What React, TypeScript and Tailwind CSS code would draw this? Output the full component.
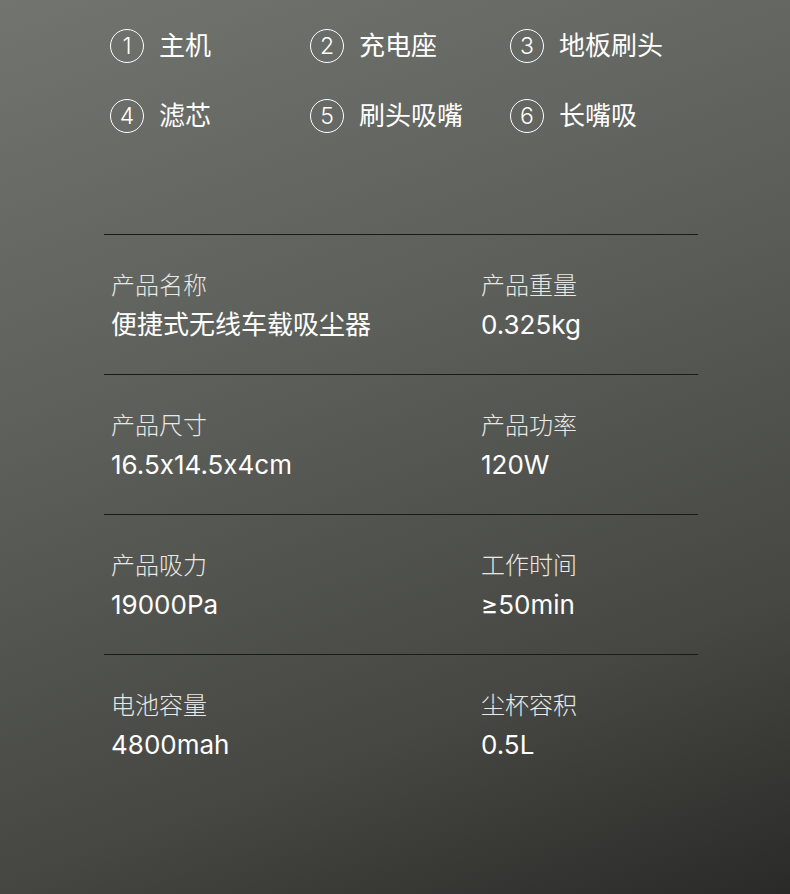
import React from "react";

const parts = [
  { n: "1", t: "主机" },
  { n: "2", t: "充电座" },
  { n: "3", t: "地板刷头" },
  { n: "4", t: "滤芯" },
  { n: "5", t: "刷头吸嘴" },
  { n: "6", t: "长嘴吸" },
];

const specs: [string, string, string, string][] = [
  ["产品名称", "便捷式无线车载吸尘器", "产品重量", "0.325kg"],
  ["产品尺寸", "16.5x14.5x4cm", "产品功率", "120W"],
  ["产品吸力", "19000Pa", "工作时间", "≥50min"],
  ["电池容量", "4800mah", "尘杯容积", "0.5L"],
];

function Cell({ label, value }: { label: string; value: string }) {
  return (
    <div className="flex flex-col gap-[6px]">
      <div className="text-[24px] leading-[32px] font-light text-[#e8e8e6]">{label}</div>
      <div className="text-[26px] leading-[34px] text-white [font-feature-settings:'calt'_0]">{value}</div>
    </div>
  );
}

export default function App() {
  return (
    <div
      className="w-[790px] h-[894px] overflow-hidden bg-[linear-gradient(160deg,#72746f_0%,#5c5e59_40%,#464742_75%,#2a2a28_100%)]"
      style={{ fontFamily: '"Inter", "Noto Sans CJK SC", sans-serif' }}
    >
      <div className="pl-[110px] pt-[29px] grid grid-cols-[200px_200px_200px] gap-y-[36px]">
        {parts.map((p) => (
          <div key={p.n} className="flex items-center gap-[15px] h-[34px]">
            <div className="w-[34px] h-[34px] rounded-full border-[1.5px] border-white flex items-center justify-center text-[23px] font-light text-white leading-none">
              {p.n}
            </div>
            <div className="text-[26px] leading-[34px] text-white">{p.t}</div>
          </div>
        ))}
      </div>
      <div className="ml-[104px] w-[594px] mt-[101px]">
        {specs.map((s, i) => (
          <div
            key={i}
            className="border-t border-[#1a1a19] h-[140px] pt-[35px] pl-[7px] grid grid-cols-[370px_1fr]"
          >
            <Cell label={s[0]} value={s[1]} />
            <Cell label={s[2]} value={s[3]} />
          </div>
        ))}
      </div>
    </div>
  );
}
